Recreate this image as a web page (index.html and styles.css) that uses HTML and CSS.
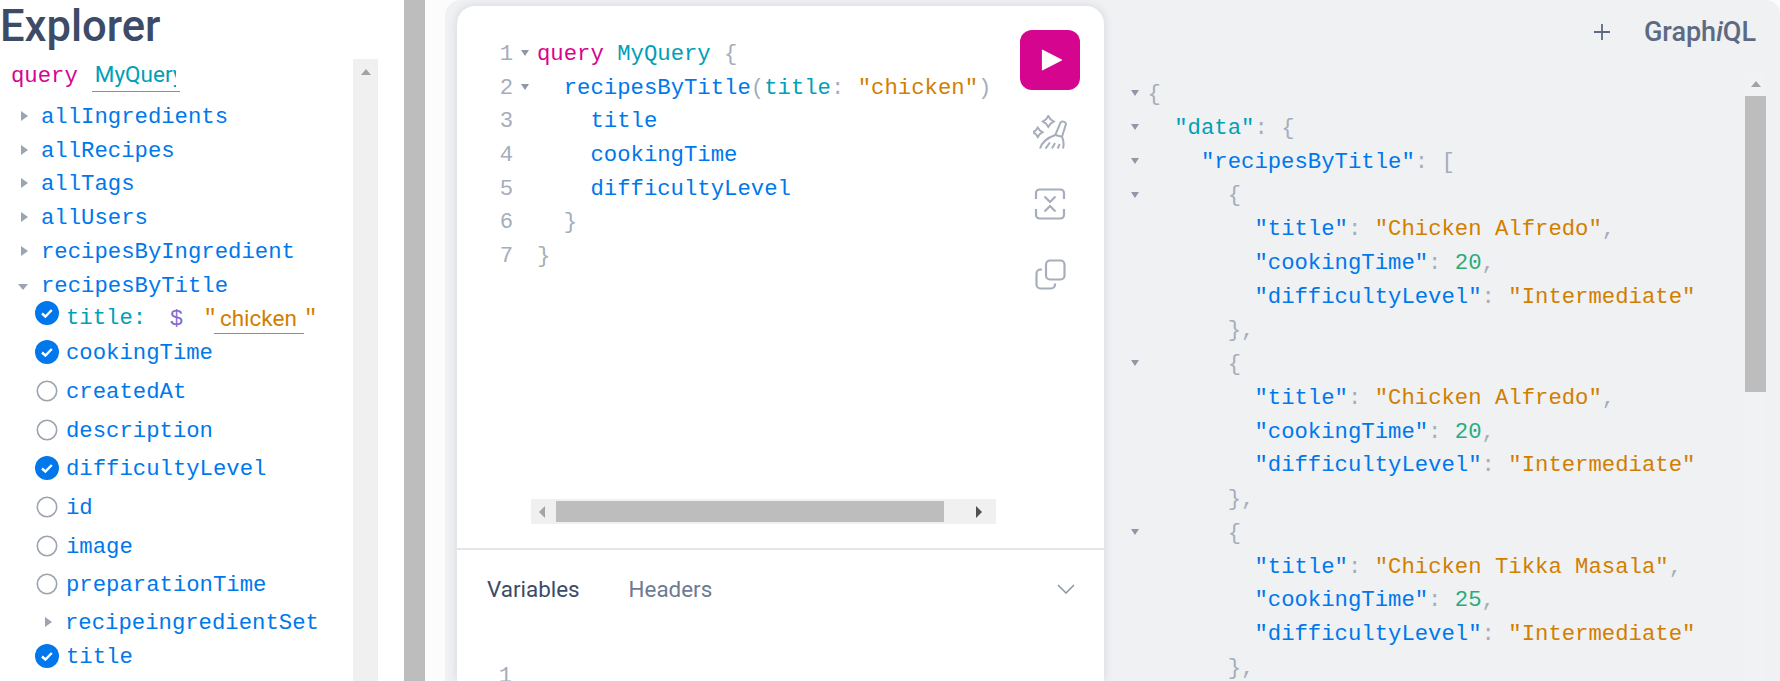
FILE: index.html
```html
<!DOCTYPE html>
<html lang="en">
<head>
<meta charset="utf-8">
<title>GraphiQL</title>
<link rel="stylesheet" href="styles.css">
</head>
<body>
<div class="page">
  <aside class="explorer">
    <h1 class="explorer-title">Explorer</h1>
    <div class="explorer-body">
      <div class="tree">
        <div class="row query-row"><span class="kw">query</span><span class="name-input"><span class="name-clip">MyQuery</span></span></div>
        <div class="row top first"><i class="caret-r"></i><span class="field">allIngredients</span></div>
        <div class="row top"><i class="caret-r"></i><span class="field">allRecipes</span></div>
        <div class="row top"><i class="caret-r"></i><span class="field">allTags</span></div>
        <div class="row top"><i class="caret-r"></i><span class="field">allUsers</span></div>
        <div class="row top"><i class="caret-r"></i><span class="field">recipesByIngredient</span></div>
        <div class="row top"><i class="caret-d"></i><span class="field">recipesByTitle</span></div>
        <div class="row arg">
          <svg class="check raised" viewBox="0 0 24 24"><circle cx="12" cy="12" r="12" fill="#0078eb"/><path d="M7 12.5l3.4 3L16.8 9" fill="none" stroke="#fff" stroke-width="2.4"/></svg>
          <span class="attr">title:</span><span class="dollar">$</span><span class="quote first-q">"</span><span class="str-input">chicken</span><span class="quote">"</span>
        </div>
        <div class="row sub"><svg class="check" viewBox="0 0 24 24"><circle cx="12" cy="12" r="12" fill="#0078eb"/><path d="M7 12.5l3.4 3L16.8 9" fill="none" stroke="#fff" stroke-width="2.4"/></svg><span class="field">cookingTime</span></div>
        <div class="row sub"><svg class="check" viewBox="0 0 24 24"><circle cx="12" cy="12" r="9.7" fill="none" stroke="#9ca3b1" stroke-width="1.6"/></svg><span class="field">createdAt</span></div>
        <div class="row sub"><svg class="check" viewBox="0 0 24 24"><circle cx="12" cy="12" r="9.7" fill="none" stroke="#9ca3b1" stroke-width="1.6"/></svg><span class="field">description</span></div>
        <div class="row sub"><svg class="check" viewBox="0 0 24 24"><circle cx="12" cy="12" r="12" fill="#0078eb"/><path d="M7 12.5l3.4 3L16.8 9" fill="none" stroke="#fff" stroke-width="2.4"/></svg><span class="field">difficultyLevel</span></div>
        <div class="row sub"><svg class="check" viewBox="0 0 24 24"><circle cx="12" cy="12" r="9.7" fill="none" stroke="#9ca3b1" stroke-width="1.6"/></svg><span class="field">id</span></div>
        <div class="row sub"><svg class="check" viewBox="0 0 24 24"><circle cx="12" cy="12" r="9.7" fill="none" stroke="#9ca3b1" stroke-width="1.6"/></svg><span class="field">image</span></div>
        <div class="row sub"><svg class="check" viewBox="0 0 24 24"><circle cx="12" cy="12" r="9.7" fill="none" stroke="#9ca3b1" stroke-width="1.6"/></svg><span class="field">preparationTime</span></div>
        <div class="row set"><i class="caret-r inner"></i><span class="field">recipeingredientSet</span></div>
        <div class="row last"><svg class="check" viewBox="0 0 24 24"><circle cx="12" cy="12" r="12" fill="#0078eb"/><path d="M7 12.5l3.4 3L16.8 9" fill="none" stroke="#fff" stroke-width="2.4"/></svg><span class="field">title</span></div>
      </div>
      <div class="vtrack"><i class="arrow-up"></i></div>
    </div>
  </aside>
  <div class="divider"></div>
  <main class="graphiql">
    <section class="card">
      <div class="editor">
        <div class="editor-main">
          <div class="code">
            <div class="line"><span class="ln">1</span><span class="fold"><i></i></span><span class="src"><span class="kw">query</span> <span class="def">MyQuery</span> <span class="pn">{</span></span></div>
            <div class="line"><span class="ln">2</span><span class="fold"><i></i></span><span class="src">  <span class="field">recipesByTitle</span><span class="pn">(</span><span class="attr">title</span><span class="pn">:</span> <span class="str">"chicken"</span><span class="pn">)</span></span></div>
            <div class="line"><span class="ln">3</span><span class="fold"></span><span class="src">    <span class="field">title</span></span></div>
            <div class="line"><span class="ln">4</span><span class="fold"></span><span class="src">    <span class="field">cookingTime</span></span></div>
            <div class="line"><span class="ln">5</span><span class="fold"></span><span class="src">    <span class="field">difficultyLevel</span></span></div>
            <div class="line"><span class="ln">6</span><span class="fold"></span><span class="src">  <span class="pn">}</span></span></div>
            <div class="line"><span class="ln">7</span><span class="fold"></span><span class="src"><span class="pn">}</span></span></div>
          </div>
          <div class="toolbar">
            <button class="run" type="button" aria-label="Run">
              <svg viewBox="0 0 22 22" class="play"><path d="M1.5 1.2v19.6L20.5 11z" fill="#fff" stroke="#fff" stroke-width="1.2" stroke-linejoin="round"/></svg>
            </button>
            <svg class="tool" viewBox="0 0 34 34" fill="none" stroke="#a6adbb" stroke-width="2"><path d="M15.3 1l2.2 3.3 3.3 2.2-3.3 2.2-2.2 3.3-2.2-3.3-3.3-2.2 3.3-2.2z"/><path d="M4.8 12.5l1.9 2.9 2.9 1.9-2.9 1.9-1.9 2.9-1.9-2.9L0 17.3l2.9-1.9z"/><path d="M7 33.5c2-6 8-11 15.3-13.5l5.2-12.3c.9-2.2 5.6-1.2 5.4 1.6L29 21.7c1.8 4 2 8 1 11.8"/><path d="M22.3 20l6.7 1.7M12.5 33.5l4.5-6M19 33.5l3-5.5M24.7 33.5l2-4.5"/></svg>
            <svg class="tool" viewBox="0 0 34 34" fill="none" stroke="#a6adbb" stroke-width="2.2"><path d="M3 12V6a3.5 3.5 0 0 1 3.5-3.5h21A3.5 3.5 0 0 1 31 6v6M3 22v6a3.5 3.5 0 0 0 3.5 3.5h21a3.5 3.5 0 0 0 3.5-3.5v-6M11.5 9.500l5.500 5.500 5.500-5.500M11.500 24.500l5.500-5.500 5.500 5.500"/></svg>
            <svg class="tool" viewBox="0 0 34 34" fill="none" stroke="#a6adbb" stroke-width="2.2"><rect x="13" y="1.5" width="18.5" height="19" rx="4"/><path d="M9 10.5H7.5a4 4 0 0 0-4 4v11a4 4 0 0 0 4 4H18a4 4 0 0 0 4-4v-1"/></svg>
          </div>
        </div>
        <div class="hscroll">
          <i class="arrow-left"></i>
          <span class="hthumb"></span>
          <i class="arrow-right"></i>
        </div>
      </div>
      <div class="tabs">
        <span class="tab active">Variables</span>
        <span class="tab">Headers</span>
        <svg class="chev" viewBox="0 0 18 10" fill="none" stroke="#8a93a6" stroke-width="1.5"><path d="M1 1l8 8 8-8"/></svg>
      </div>
      <div class="line var-line"><span class="ln small">1</span></div>
    </section>
    <section class="results">
      <header class="top-bar">
        <svg class="plus" viewBox="0 0 16 16" fill="none" stroke="#5d6a82" stroke-width="1.8"><path d="M8 0v16M0 8h16"/></svg>
        <span class="logo">Graph<em>i</em>QL</span>
      </header>
      <div class="output">
        <div class="json">
          <div class="jl"><span class="fold"><i></i></span><span class="src"><span class="pn">{</span></span></div>
          <div class="jl"><span class="fold"><i></i></span><span class="src">  <span class="attr">"data"</span><span class="pn">: {</span></span></div>
          <div class="jl"><span class="fold"><i></i></span><span class="src">    <span class="field">"recipesByTitle"</span><span class="pn">: [</span></span></div>
          <div class="jl"><span class="fold"><i></i></span><span class="src">      <span class="pn">{</span></span></div>
          <div class="jl"><span class="fold"></span><span class="src">        <span class="field">"title"</span><span class="pn">:</span> <span class="str">"Chicken Alfredo"</span><span class="pn">,</span></span></div>
          <div class="jl"><span class="fold"></span><span class="src">        <span class="field">"cookingTime"</span><span class="pn">:</span> <span class="num">20</span><span class="pn">,</span></span></div>
          <div class="jl"><span class="fold"></span><span class="src">        <span class="field">"difficultyLevel"</span><span class="pn">:</span> <span class="str">"Intermediate"</span></span></div>
          <div class="jl"><span class="fold"></span><span class="src">      <span class="pn">},</span></span></div>
          <div class="jl"><span class="fold"><i></i></span><span class="src">      <span class="pn">{</span></span></div>
          <div class="jl"><span class="fold"></span><span class="src">        <span class="field">"title"</span><span class="pn">:</span> <span class="str">"Chicken Alfredo"</span><span class="pn">,</span></span></div>
          <div class="jl"><span class="fold"></span><span class="src">        <span class="field">"cookingTime"</span><span class="pn">:</span> <span class="num">20</span><span class="pn">,</span></span></div>
          <div class="jl"><span class="fold"></span><span class="src">        <span class="field">"difficultyLevel"</span><span class="pn">:</span> <span class="str">"Intermediate"</span></span></div>
          <div class="jl"><span class="fold"></span><span class="src">      <span class="pn">},</span></span></div>
          <div class="jl"><span class="fold"><i></i></span><span class="src">      <span class="pn">{</span></span></div>
          <div class="jl"><span class="fold"></span><span class="src">        <span class="field">"title"</span><span class="pn">:</span> <span class="str">"Chicken Tikka Masala"</span><span class="pn">,</span></span></div>
          <div class="jl"><span class="fold"></span><span class="src">        <span class="field">"cookingTime"</span><span class="pn">:</span> <span class="num">25</span><span class="pn">,</span></span></div>
          <div class="jl"><span class="fold"></span><span class="src">        <span class="field">"difficultyLevel"</span><span class="pn">:</span> <span class="str">"Intermediate"</span></span></div>
          <div class="jl"><span class="fold"></span><span class="src">      <span class="pn">},</span></span></div>
        </div>
        <div class="res-scroll"><i class="arrow-up"></i><span class="res-thumb"></span></div>
      </div>
    </section>
  </main>
</div>
</body>
</html>
```

FILE: styles.css
```css
* { box-sizing: border-box; }
html, body { margin: 0; height: 681px; overflow: hidden; background: #fff; }
.page {
  display: flex;
  height: 681px;
  overflow: hidden;
  font-family: "Liberation Mono", monospace;
  font-size: 22.27px;
}
i { display: block; }

/* explorer */
.explorer { width: 404px; flex: none; display: flex; flex-direction: column; }
.explorer-title {
  margin: 0;
  height: 59px;
  font: 500 43.5px/54px Roboto, sans-serif;
  color: #3b4b68;
}
.explorer-body { flex: 1; display: flex; min-height: 0; }
.tree { width: 353px; flex: none; overflow: hidden; }
.row { display: flex; align-items: center; white-space: pre; padding-top: 2px; }
.query-row { height: 34px; padding: 0 0 0 11px; }
.top { height: 33.8px; padding-left: 21px; }
.first { margin-top: 6px; }
.arg { height: 31px; padding-left: 35px; }
.sub { height: 38.7px; padding-left: 35px; }
.set { height: 36px; padding-left: 45px; }
.last { height: 32px; padding-left: 35px; }
.caret-r {
  width: 0; height: 0; flex: none;
  border-left: 7px solid #9ca3b1;
  border-top: 5.5px solid transparent;
  border-bottom: 5.5px solid transparent;
  margin: 0 13px 2px 0;
}
.caret-d {
  width: 0; height: 0; flex: none;
  margin: 2px 13px 0 -3px;
  border-top: 6px solid #9ca3b1;
  border-left: 5.5px solid transparent;
  border-right: 5.5px solid transparent;
}
.caret-r.inner { margin-right: 13px; }
.check { width: 24px; height: 24px; flex: none; margin: 0 7px 2px 0; }
.check.raised { margin-bottom: 10px; }
.kw { color: #d60590; }
.def, .attr { color: #00a0b8; }
.field { color: #0078eb; }
.str { color: #d17f00; }
.num { color: #2bab7c; }
.pn { color: #a6adbb; }
.name-input {
  margin: 0 0 0 14px;
  width: 88px;
  height: 32px;
  padding-left: 3px;
  border-bottom: 1.5px solid #8f8f8f;
  font: 400 22.5px/29px Roboto, sans-serif;
  color: #00a0b8;
  overflow: hidden;
}
.name-clip { display: block; width: 81px; overflow: hidden; }
.dollar { color: #7e6bd3; margin-left: 24px; font-family: "Liberation Sans", sans-serif; }
.quote { color: #d17f00; font-family: "Liberation Mono", monospace; }
.first-q { margin-left: 21px; }
.str-input {
  width: 90px;
  height: 30px;
  margin: 2px 0 0 -3px;
  padding-left: 6px;
  border-bottom: 1.5px solid #8f8f8f;
  font: 400 22.5px/28px Roboto, sans-serif;
  color: #d17f00;
}
.vtrack {
  width: 25px;
  flex: none;
  background: #f0f0f0;
  padding-top: 10px;
  display: flex;
  justify-content: center;
}
.arrow-up {
  width: 0; height: 0;
  border-bottom: 6px solid #a3a3a3;
  border-left: 5.5px solid transparent;
  border-right: 5.5px solid transparent;
}
.divider { width: 21px; flex: none; background: #bdbdbd; }

/* main */
.graphiql {
  position: relative;
  flex: 1;
  display: flex;
  padding: 0 0 0 20px;
  min-width: 0;
  background: #fcfcfd;
}
.graphiql::before {
  content: "";
  position: absolute;
  left: 20px; right: 0; top: 0; bottom: 0;
  background: #f0f1f3;
  border-radius: 16px 14px 0 0;
}
.card {
  width: 647px;
  flex: none;
  margin: 6px 0 0 12px;
  background: #fff;
  border-radius: 18px 18px 0 0;
  box-shadow: 0 0 10px rgba(59, 75, 104, .16);
  position: relative;
  z-index: 1;
}
.results {
  position: relative;
  flex: 1;
  min-width: 0;
  display: flex;
  flex-direction: column;
}
.editor { height: 544px; border-bottom: 2px solid #e3e5ea; }
.editor-main { display: flex; height: 493px; }
.code { flex: 1; min-width: 0; padding-top: 32px; overflow: hidden; }
.line, .jl { display: flex; height: 33.7px; line-height: 33.7px; white-space: pre; }
.jl { height: 33.75px; line-height: 33.75px; }
.ln { width: 56px; text-align: right; color: #a6adbb; flex: none; }
.fold { width: 24px; flex: none; display: flex; align-items: center; justify-content: center; padding-bottom: 3px; }
.fold i {
  width: 0; height: 0;
  border-top: 6px solid #8f97a8;
  border-left: 4px solid transparent;
  border-right: 4px solid transparent;
}
.src { flex: none; }
.toolbar {
  width: 100px;
  flex: none;
  padding: 24px 24px 0 16px;
  display: flex;
  flex-direction: column;
  align-items: center;
}
.run {
  width: 60px;
  height: 60px;
  flex: none;
  border: 0;
  padding: 0;
  border-radius: 12px;
  background: #d60590;
  display: flex;
  align-items: center;
  justify-content: center;
  margin-bottom: 25px;
}
.play { width: 22px; height: 22px; margin-left: 3px; }
.tool { width: 34px; height: 34px; flex: none; margin-bottom: 38px; }
.hscroll {
  margin-left: 74px;
  width: 465px;
  height: 25px;
  background: #f0f0f0;
  display: flex;
  align-items: center;
  padding-left: 8px;
}
.arrow-left {
  width: 0; height: 0;
  border-right: 6px solid #a3a3a3;
  border-top: 6px solid transparent;
  border-bottom: 6px solid transparent;
}
.hthumb { width: 388px; height: 21px; background: #bdbdbd; margin-left: 11px; }
.arrow-right {
  width: 0; height: 0;
  margin-left: 32px;
  border-left: 6px solid #505050;
  border-top: 6px solid transparent;
  border-bottom: 6px solid transparent;
}
.tabs {
  display: flex;
  align-items: center;
  height: 78px;
  padding: 0 30px;
  font: 400 22.4px Roboto, sans-serif;
}
.tab { color: #6e7a92; margin-right: 49px; }
.tab.active { color: #3b4b68; }
.chev { width: 18px; height: 10px; margin-left: auto; margin-right: -1px; }
.var-line { padding-top: 32px; height: auto; }
.ln.small { width: 55px; }

/* results */
.top-bar {
  height: 71px;
  flex: none;
  display: flex;
  align-items: flex-start;
  justify-content: flex-end;
  padding: 17px 24px 0 0;
}
.plus { width: 16px; height: 16px; margin: 7px 34px 0 0; }
.logo { font: 500 27px/31px Roboto, sans-serif; color: #5d6a82; }
.logo em { font-style: italic; }
.output { flex: 1; display: flex; min-height: 0; }
.json { flex: 1; min-width: 0; padding: 7px 0 0 18px; overflow: hidden; }
.jl .fold { width: 25.5px; }
.res-scroll {
  width: 21px;
  flex: none;
  margin-right: 14px;
  background: #f1f2f4;
  padding-top: 10px;
  display: flex;
  flex-direction: column;
  align-items: center;
}
.res-thumb { width: 21px; height: 296px; background: #bdbdbd; margin-top: 9px; }
```
